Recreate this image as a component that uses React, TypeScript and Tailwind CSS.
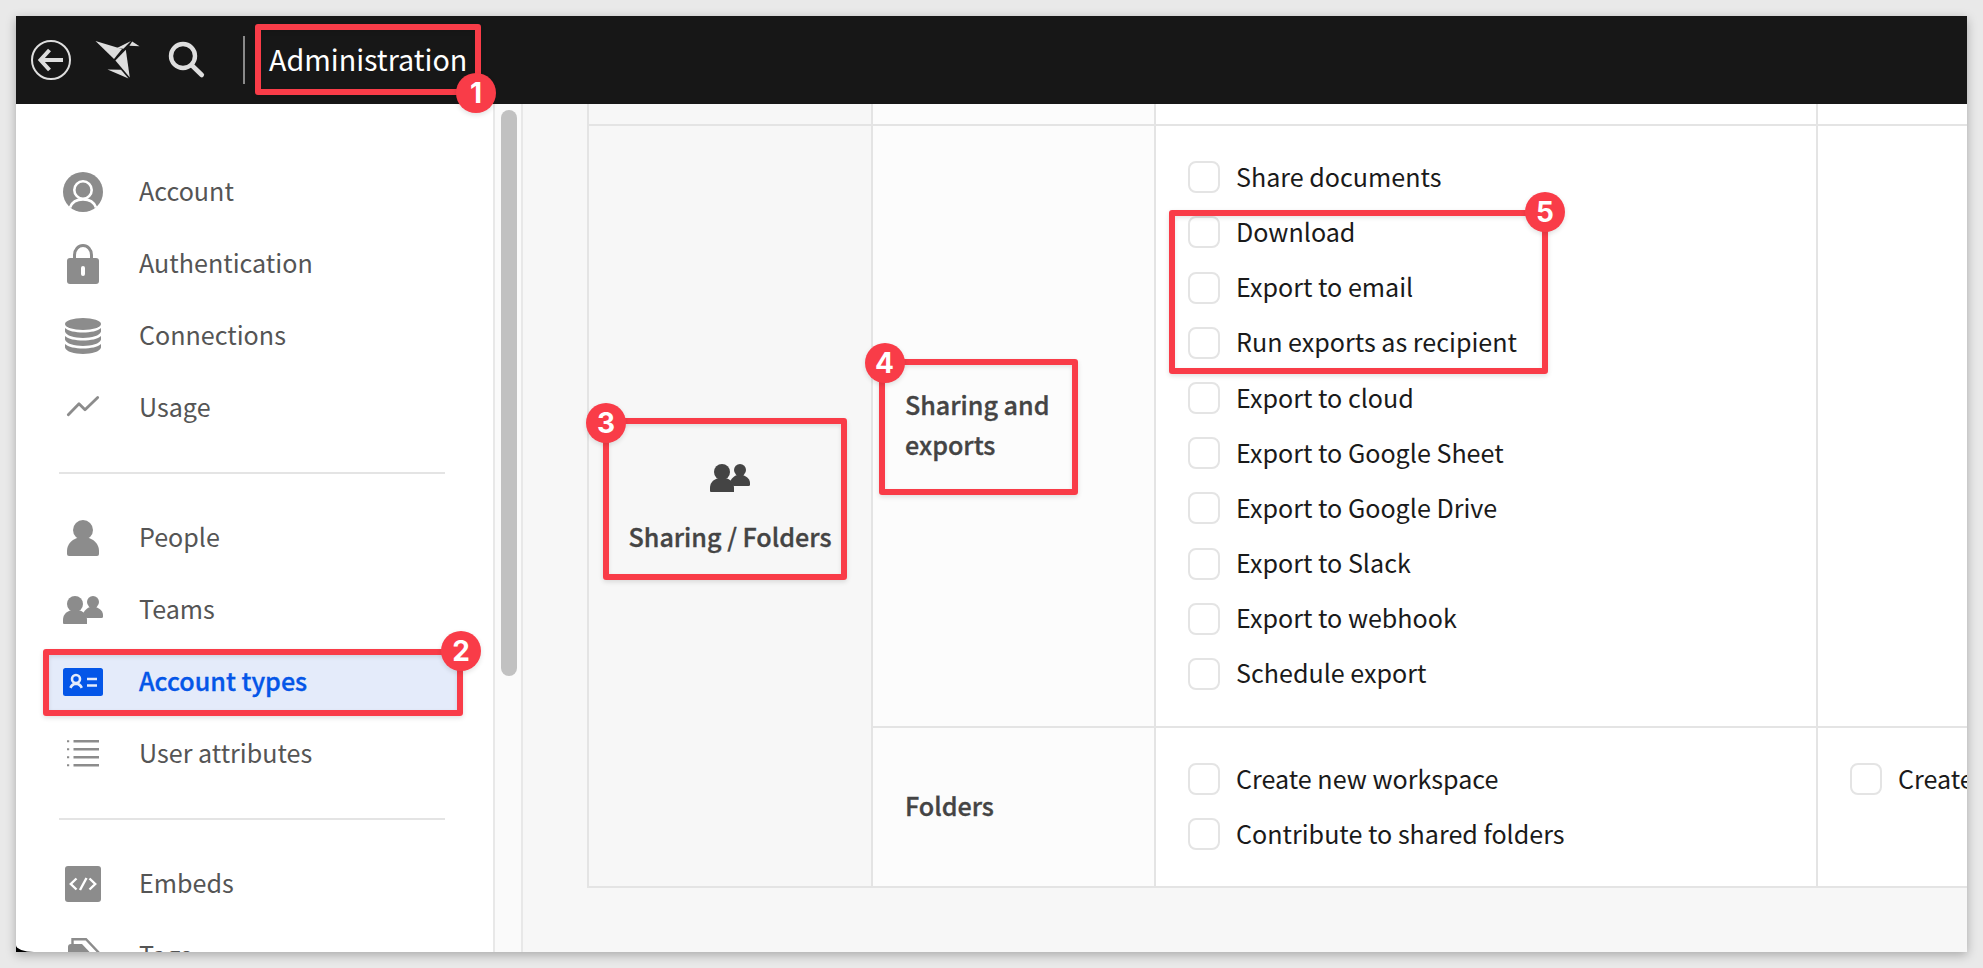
import type { ReactNode } from "react";

const GREY = "#8c8c8c";

function BackIcon() {
  return (
    <svg width="40" height="40" viewBox="0 0 40 40" fill="none" stroke="#dedede">
      <circle cx="20" cy="20" r="19" strokeWidth="2" />
      <path d="M9.5 20H32M18.5 10L9.5 20L18.5 30" strokeWidth="4" />
    </svg>
  );
}

function BirdLogo() {
  return (
    <svg width="46" height="40" viewBox="0 0 46 40" fill="#dedede">
      <path d="M0.5 1L27 9L19 19Z" />
      <path d="M22 8L36 1L28.4 8.8Z" />
      <path d="M37.2 1.5L44.5 6.2L34.4 5.8Z" />
      <path d="M20.4 20.4L30.8 9.8L34.8 37.4Z" />
      <path d="M12.5 29.6L26 29.8L33.5 38.6Z" />
    </svg>
  );
}

function SearchIcon() {
  return (
    <svg width="38" height="38" viewBox="0 0 38 38" fill="none" stroke="#dedede">
      <circle cx="15" cy="15" r="12" strokeWidth="4.4" />
      <path d="M24 24.5L33.8 34" strokeWidth="4.6" strokeLinecap="round" />
    </svg>
  );
}

function AccountIcon() {
  return (
    <svg width="40" height="40" viewBox="0 0 40 40">
      <circle cx="20" cy="20" r="20" fill={GREY} />
      <circle cx="20" cy="18" r="8.7" fill="none" stroke="#fff" strokeWidth="2.6" />
      <path d="M7 35.5C9 30 14 27.4 20 27.4S31 30 33 35.5" fill="none" stroke="#fff" strokeWidth="2.6" />
    </svg>
  );
}

function LockIcon() {
  return (
    <svg width="40" height="40" viewBox="0 0 40 40">
      <path d="M11.5 16V11a8.5 9.5 0 0 1 17 0v5" fill="none" stroke={GREY} strokeWidth="3" />
      <rect x="4" y="14" width="32" height="26" rx="3" fill={GREY} />
      <rect x="18" y="22" width="4" height="10" rx="2" fill="#fff" />
    </svg>
  );
}

function DatabaseIcon() {
  return (
    <svg width="40" height="40" viewBox="0 0 40 40" fill={GREY}>
      <ellipse cx="20" cy="8" rx="18" ry="6" />
      <path d="M2 12C8 18 32 18 38 12V15.5C36 24 4 24 2 15.5Z" />
      <path d="M2 20C8 26 32 26 38 20V23.5C36 32 4 32 2 23.5Z" />
      <path d="M2 28C8 34 32 34 38 28V31.5C36 40 4 40 2 31.5Z" />
    </svg>
  );
}

function UsageIcon() {
  return (
    <svg width="40" height="40" viewBox="0 0 40 40" fill="none" stroke={GREY} strokeWidth="2.8" strokeLinecap="round" strokeLinejoin="round">
      <path d="M5.3 26.8L16 15.8L22 21.8L34.7 9.4" />
    </svg>
  );
}

function PersonIcon() {
  return (
    <svg width="40" height="40" viewBox="0 0 40 40" fill={GREY}>
      <circle cx="20" cy="12" r="10" />
      <path d="M14 20H26C32 22 36 27 36 33V36Q36 38 34 38H6Q4 38 4 36V33C4 27 8 22 14 20Z" />
    </svg>
  );
}

function TeamsIcon({ color = GREY }: { color?: string }) {
  return (
    <svg width="40" height="28" viewBox="0 0 40 28" fill={color}>
      <circle cx="12" cy="8" r="8" />
      <path d="M7 14.5H17C22 16.5 24 20 24 24V28H1Q0 28 0 27V24C0 19 3 16 7 14.5Z" />
      <circle cx="30" cy="6" r="6" />
      <path d="M27 11H33C37 12.5 40 15.5 40 19V20.5Q40 22 38.5 22H23.5L20.5 16.5C22.5 13.5 24.5 12 27 11Z" />
    </svg>
  );
}

function AccountTypesIcon() {
  return (
    <svg width="40" height="28" viewBox="0 0 40 28" fill="none" stroke="#e4ebfa">
      <rect width="40" height="28" rx="2.5" fill="#0456e8" stroke="none" />
      <circle cx="13" cy="11" r="4" strokeWidth="2.6" />
      <path d="M7.4 19.8Q9.4 15.8 13 15.6Q16.8 15.8 18.8 19.8" strokeWidth="2.6" />
      <path d="M24 11H34M24 17.5H34" strokeWidth="2.6" />
    </svg>
  );
}

function ListIcon() {
  return (
    <svg width="40" height="40" viewBox="0 0 40 40" fill="none" stroke={GREY} strokeWidth="2.4">
      <path d="M10.5 7.2H36M10.5 15.2H36M10.5 23.2H36M10.5 31.2H36" />
      <path d="M4 7.2H6.2M4 15.2H6.2M4 23.2H6.2M4 31.2H6.2" strokeWidth="2" />
    </svg>
  );
}

function EmbedsIcon() {
  return (
    <svg width="40" height="40" viewBox="0 0 40 40">
      <rect x="2" y="2" width="36" height="36" rx="3" fill={GREY} />
      <path d="M13.5 14.5L7.8 20L13.5 25.5M26.5 14.5L32.2 20L26.5 25.5M23.5 14L17 26" fill="none" stroke="#fff" strokeWidth="2.4" />
    </svg>
  );
}

function TagsIcon() {
  return (
    <svg width="40" height="40" viewBox="0 0 40 40">
      <path d="M9.5 9V3.2H23L38 19" fill="none" stroke={GREY} strokeWidth="2.4" />
      <path d="M8 8H19L36 26L20 40L5 24V11Q5 8 8 8Z" fill={GREY} />
    </svg>
  );
}

function NavItem({ icon, label, active }: { icon: ReactNode; label: string; active?: boolean }) {
  return (
    <li className="flex h-[72px] items-center">
      <a
        className={
          active
            ? "flex h-[60px] w-[414px] items-center bg-[#e4ebfa] pl-[18px] font-medium text-[#0456e8] [-webkit-text-stroke:0.35px]"
            : "flex h-[60px] w-[414px] items-center pl-[18px] text-[#555555]"
        }
      >
        <span className="flex w-10 justify-center">{icon}</span>
        <span className="ml-9 pb-[5px] leading-[40px]">{label}</span>
      </a>
    </li>
  );
}

function Divider() {
  return <hr className="my-7 ml-[14px] h-0.5 w-[386px] border-0 bg-[#e4e4e4]" />;
}

function Option({ label }: { label: string }) {
  return (
    <label className="flex h-[55.2px] items-center whitespace-nowrap">
      <span className="h-8 w-8 shrink-0 rounded-lg border-2 border-[#e4e4e4] bg-white" />
      <span className="ml-4 pb-[3px] leading-[40px]">{label}</span>
    </label>
  );
}

const exportOptions = [
  "Share documents",
  "Download",
  "Export to email",
  "Run exports as recipient",
  "Export to cloud",
  "Export to Google Sheet",
  "Export to Google Drive",
  "Export to Slack",
  "Export to webhook",
  "Schedule export",
];

function Callout({ n, box, badge }: { n: number; box: string; badge: string }) {
  return (
    <>
      <div className={`absolute rounded-[3px] border-6 border-[#f93c48] shadow-[0_2px_5px_rgba(0,0,0,0.12),inset_0_2px_4px_rgba(0,0,0,0.1)] ${box}`} />
      <div
        className={`absolute flex h-10 w-10 items-center justify-center rounded-full bg-[#f93c48] font-['Inter',sans-serif] text-[28px] leading-none font-bold text-white shadow-[0_2px_5px_rgba(0,0,0,0.12)] ${badge}`}
      >
        {n}
      </div>
    </>
  );
}

export default function App() {
  return (
    <div className="relative h-[968px] w-[1983px] overflow-hidden bg-[#e9e9e9] p-4 font-['Noto_Sans_CJK_SC',sans-serif] text-[25.1px]">
      <div className="flex h-[936px] w-[1951px] flex-col overflow-hidden bg-black shadow-[0_3px_10px_rgba(0,0,0,0.28)]">
        <header className="flex h-[88px] shrink-0 items-center bg-[#171717] pl-[15px]">
          <BackIcon />
          <span className="ml-6">
            <BirdLogo />
          </span>
          <span className="ml-[27px]">
            <SearchIcon />
          </span>
          <span className="ml-[37px] h-12 w-0.5 bg-[#8a8a8a]" />
          <h1 className="ml-6 pb-[3px] text-[28.7px] leading-[48px] text-white">Administration</h1>
        </header>

        <div className="flex h-[848px]">
          <nav className="h-full w-[477px] shrink-0 overflow-hidden bg-white pt-[52px] pl-[29px] [border-bottom-left-radius:18px_7px]">
            <ul>
              <NavItem icon={<AccountIcon />} label="Account" />
              <NavItem icon={<LockIcon />} label="Authentication" />
              <NavItem icon={<DatabaseIcon />} label="Connections" />
              <NavItem icon={<UsageIcon />} label="Usage" />
            </ul>
            <Divider />
            <ul>
              <NavItem icon={<PersonIcon />} label="People" />
              <NavItem icon={<TeamsIcon />} label="Teams" />
              <NavItem icon={<AccountTypesIcon />} label="Account types" active />
              <NavItem icon={<ListIcon />} label="User attributes" />
            </ul>
            <Divider />
            <ul>
              <NavItem icon={<EmbedsIcon />} label="Embeds" />
              <NavItem icon={<TagsIcon />} label="Tags" />
            </ul>
          </nav>

          <div className="h-full w-[30px] shrink-0 border-x-2 border-[#e8e8e8] bg-[#fafafa] pt-1.5 pl-1.5">
            <div className="h-[566px] w-4 rounded-full bg-[#c1c1c1]" />
          </div>

          <main className="h-full grow overflow-hidden bg-[#f7f7f7] pl-16">
            <div className="grid h-[784px] w-[1602px] grid-cols-[286px_283px_662px_371px] grid-rows-[22px_602px_160px] text-[#1a1a1a]">
              <div className="border-x-2 border-b-2 border-[#e4e4e4]" />
              <div className="border-r-2 border-b-2 border-[#e4e4e4] bg-[#fcfcfc]" />
              <div className="border-r-2 border-b-2 border-[#e4e4e4] bg-white" />
              <div className="border-b-2 border-[#e4e4e4] bg-white" />

              <div className="row-span-2 flex flex-col items-center border-x-2 border-b-2 border-[#e4e4e4] pt-[338px] font-medium text-[#444444] [-webkit-text-stroke:0.35px]">
                <TeamsIcon color="#444444" />
                <div className="mt-[24px] leading-[40px] whitespace-nowrap">Sharing / Folders</div>
              </div>
              <div className="flex items-center border-r-2 border-b-2 border-[#e4e4e4] bg-[#fcfcfc] px-8 pb-[5px] leading-[40px] font-medium text-[#444444] [-webkit-text-stroke:0.35px]">
                Sharing and exports
              </div>
              <div className="border-r-2 border-b-2 border-[#e4e4e4] bg-white pt-[23.7px] pl-8">
                {exportOptions.map((label) => (
                  <Option key={label} label={label} />
                ))}
              </div>
              <div className="border-b-2 border-[#e4e4e4] bg-white" />

              <div className="flex items-center border-r-2 border-b-2 border-[#e4e4e4] bg-[#fcfcfc] px-8 pb-[5px] leading-[40px] font-medium text-[#444444] [-webkit-text-stroke:0.35px]">
                Folders
              </div>
              <div className="border-r-2 border-b-2 border-[#e4e4e4] bg-white pt-[23.7px] pl-8">
                <Option label="Create new workspace" />
                <Option label="Contribute to shared folders" />
              </div>
              <div className="border-b-2 border-[#e4e4e4] bg-white pt-[23.7px] pl-8">
                <Option label="Create" />
              </div>
            </div>
          </main>
        </div>
      </div>

      <Callout n={1} box="left-[255px] top-[23.5px] h-[71px] w-[225.5px]" badge="left-[456px] top-[73.4px]" />
      <Callout n={2} box="left-[42.5px] top-[649px] h-[67px] w-[420.5px]" badge="left-[441px] top-[631px]" />
      <Callout n={3} box="left-[602.5px] top-[417.5px] h-[162.5px] w-[244.5px]" badge="left-[586px] top-[403px]" />
      <Callout n={4} box="left-[878.5px] top-[358.5px] h-[136px] w-[199px]" badge="left-[864.5px] top-[343px]" />
      <Callout n={5} box="left-[1169px] top-[209.5px] h-[164.5px] w-[379px]" badge="left-[1525px] top-[192px]" />
    </div>
  );
}
